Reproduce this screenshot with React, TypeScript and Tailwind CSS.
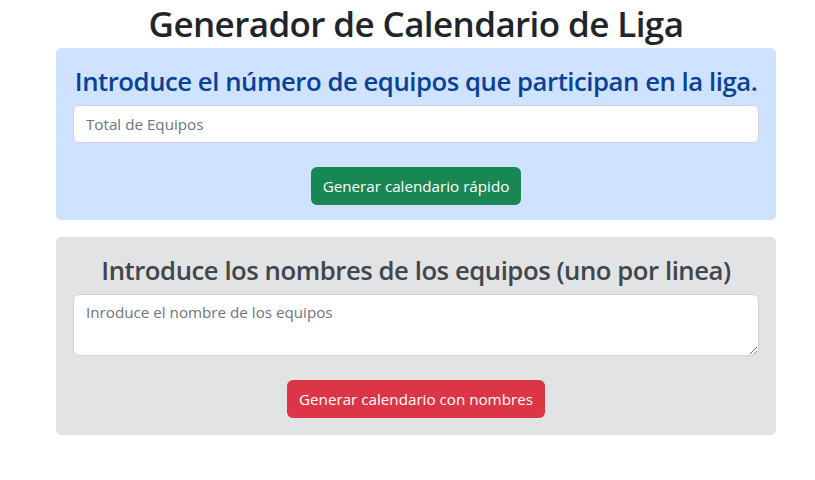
import React from "react";

export default function App() {
  return (
    <div className="min-h-[480px] bg-white font-['Open_Sans',sans-serif] text-[#212529]">
      <h1 className="text-center text-[35px] leading-[48px] font-semibold tracking-[-0.6px] ml-[56px] w-[720px]">
        Generador de Calendario de Liga
      </h1>

      <div className="ml-[56px] w-[720px] bg-[#cfe2ff] rounded-[5px] px-[17px] pt-[18px] pb-[15px]">
        <h3 className="text-center text-[25.7px] leading-[32px] font-semibold tracking-[-0.45px] text-[#084298] mb-[7px]">
          Introduce el número de equipos que participan en la liga.
        </h3>
        <input
          type="text"
          placeholder="Total de Equipos"
          className="block w-full h-[38px] bg-white border border-[#ced4da] rounded-[6px] px-3 text-[15.2px] placeholder:text-[#6c757d]"
        />
        <div className="flex justify-center mt-[24px]">
          <button className="bg-[#198754] text-white text-[15.2px] h-[38px] px-3 rounded-[6px]">
            Generar calendario rápido
          </button>
        </div>
      </div>

      <div className="ml-[56px] w-[720px] mt-[17px] bg-[#e2e3e5] rounded-[5px] px-[17px] pt-[18px] pb-[17px]">
        <h3 className="text-center text-[25.7px] leading-[32px] font-semibold tracking-[-0.45px] text-[#41464b] mb-[7px]">
          Introduce los nombres de los equipos (uno por linea)
        </h3>
        <textarea
          placeholder="Inroduce el nombre de los equipos"
          className="block w-full h-[62px] bg-white border border-[#ced4da] rounded-[6px] px-3 py-[6px] text-[15.2px] placeholder:text-[#6c757d]"
        />
        <div className="flex justify-center mt-[24px]">
          <button className="bg-[#dc3545] text-white text-[15.2px] h-[38px] px-3 rounded-[6px]">
            Generar calendario con nombres
          </button>
        </div>
      </div>
    </div>
  );
}
